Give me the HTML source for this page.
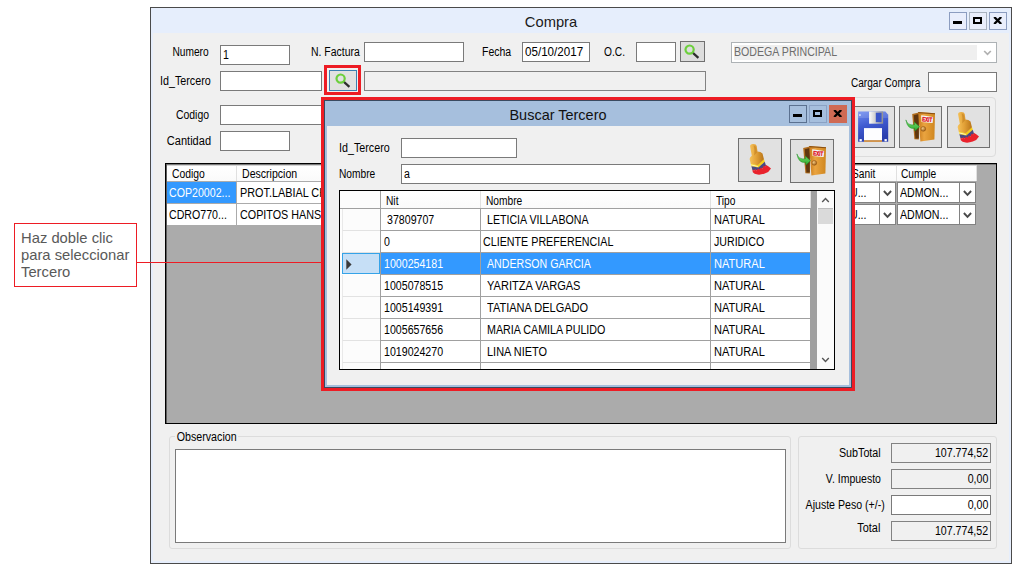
<!DOCTYPE html>
<html><head><meta charset="utf-8">
<style>
*{box-sizing:border-box;margin:0;padding:0}
html,body{width:1021px;height:570px;overflow:hidden;background:#fff}
body{position:relative;font-family:"Liberation Sans",sans-serif;font-size:12px;color:#000}
.a{position:absolute}
.l{position:absolute;white-space:nowrap;font-size:12px;line-height:14px;transform-origin:0 50%}
.l.r{transform-origin:100% 50%;text-align:right}
.tb{position:absolute;background:#fff;border:1px solid #7a7a7a;font-size:12px;line-height:14px;white-space:nowrap;overflow:hidden}
.tb span{position:absolute;top:2px;left:2px;transform-origin:0 50%;display:block}
.tb.r span{left:auto;right:2px;top:2px;transform-origin:100% 50%}
.ro{background:#f0f0f0;border-color:#828282}
.btn{position:absolute;background:#e1e1e1;border:1px solid #adadad}
.hd{position:absolute;background:linear-gradient(#fff,#fafafa);border-right:1px solid #e0e0e0;font-size:12px;line-height:14px;white-space:nowrap;overflow:hidden}
.hd span{position:absolute;top:1px;transform-origin:0 50%;display:block}
.c{position:absolute;background:#fff;font-size:12px;line-height:14px;white-space:nowrap;overflow:hidden}
.c span{position:absolute;top:4px;transform-origin:0 50%;display:block}
.sel{background:#3399ff;color:#fff}
.rh{position:absolute;background:#fcfcfc}
</style></head><body>
<div class="a" style="left:14px;top:223px;width:123px;height:64px;border:1px solid #ed1c24;background:#fff"></div>
<div class="a" style="left:21px;top:229px;font-size:15px;line-height:17px;color:#595959;white-space:nowrap;transform-origin:0 0;transform:scaleX(0.985)">Haz doble clic<br>para seleccionar<br>Tercero</div>
<div class="a" style="left:137px;top:262px;width:186px;height:1px;background:#ed1c24;z-index:5"></div>
<div class="a" style="left:150px;top:7px;width:862px;height:557px;border:1px solid #4a4a4a;background:#e6eefc"><div class="a" style="left:2px;top:25px;width:856px;height:528px;background:#f0f0f0"></div></div>
<div class="a" style="left:501px;top:12px;width:100px;text-align:center;font-size:15px;line-height:20px;color:#1a1a1a;transform:scaleX(0.98)">Compra</div>
<div class="a" style="left:949px;top:12px;width:18px;height:18px;background:#e9eefc;border:1px solid #8c9dc0"><div class="a" style="left:3px;top:8px;width:9px;height:3px;background:#000"></div></div>
<div class="a" style="left:969px;top:12px;width:18px;height:18px;background:#e9eefc;border:1px solid #a9b3c0"><div class="a" style="left:3px;top:4px;width:9px;height:7px;border:2px solid #000"></div></div>
<div class="a" style="left:989px;top:12px;width:18px;height:18px;background:#e9eefc;border:1px solid #8c9dc0"><svg class="a" style="left:3px;top:4px" width="10" height="7" viewBox="0 0 10 7"><path d="M1.2 0L8.2 7M8.2 0L1.2 7" stroke="#000" stroke-width="2.3"/></svg></div>
<div class="l r" style="right:812px;top:45px;transform:scaleX(0.85);">Numero</div>
<div class="tb " style="left:220px;top:45px;width:70px;height:20px;"><span style="transform:scaleX(0.885)">1</span></div>
<div class="l" style="left:311px;top:45px;transform:scaleX(0.87);">N. Factura</div>
<div class="tb " style="left:364px;top:42px;width:100px;height:20px;"></div>
<div class="l" style="left:482px;top:45px;transform:scaleX(0.873);">Fecha</div>
<div class="tb " style="left:522px;top:42px;width:68px;height:20px;"><span style="transform:scaleX(0.968)">05/10/2017</span></div>
<div class="l" style="left:604px;top:45px;transform:scaleX(0.85);">O.C.</div>
<div class="tb " style="left:636px;top:42px;width:40px;height:20px;"></div>
<div class="btn" style="left:680px;top:41px;width:25px;height:21px;background:#dddddd;border-color:#707070"><svg class="a" style="left:3.4px;top:2.2px" width="20" height="20" viewBox="0 0 20 20"><path d="M8.6 8.6L14.4 13.9" stroke="#2e2e2e" stroke-width="2.2"/><circle cx="5.6" cy="5.6" r="4.1" fill="none" stroke="#6ccf3c" stroke-width="2.2"/></svg></div>
<div class="a" style="left:731px;top:42px;width:266px;height:21px;border:1px solid #adb2b5;background:#fff"><div class="a" style="left:2px;top:2px;width:243px;height:15px;background:#efefef"></div><div class="l" style="left:2.2px;top:2px;color:#6d6d6d;transform:scaleX(0.885)">BODEGA PRINCIPAL</div><svg class="a" style="right:4.5px;top:6.5px" width="9" height="7" viewBox="0 0 9 7"><path d="M1.2 1L4.5 4.4L7.8 1" stroke="#b0b0b0" stroke-width="1.7" fill="none"/></svg></div>
<div class="l r" style="right:810px;top:74px;transform:scaleX(0.895);">Id_Tercero</div>
<div class="tb " style="left:220px;top:71px;width:102px;height:20px;"></div>
<div class="a" style="left:324px;top:65px;width:37px;height:30px;border:3px solid #ed1c24"></div>
<div class="btn" style="left:329px;top:70px;width:28px;height:21px;border-color:#3c7fb1"><svg class="a" style="left:5.2px;top:1.9px" width="20" height="20" viewBox="0 0 20 20"><path d="M8.6 8.6L14.4 13.9" stroke="#2e2e2e" stroke-width="2.2"/><circle cx="5.6" cy="5.6" r="4.1" fill="none" stroke="#6ccf3c" stroke-width="2.2"/></svg></div>
<div class="tb ro" style="left:364px;top:71px;width:342px;height:20px;"></div>
<div class="l" style="left:850.6px;top:76px;transform:scaleX(0.838);">Cargar Compra</div>
<div class="tb " style="left:928px;top:72px;width:69px;height:20px;"></div>
<div class="l r" style="right:812px;top:108px;transform:scaleX(0.87);">Codigo</div>
<div class="tb " style="left:220px;top:105px;width:150px;height:20px;"></div>
<div class="l r" style="right:810px;top:134px;transform:scaleX(0.92);">Cantidad</div>
<div class="tb " style="left:220px;top:131px;width:70px;height:20px;"></div>
<div class="a" style="left:840px;top:97px;width:156px;height:60px;border:1px solid #dcdcdc;border-radius:4px"></div>
<div class="btn" style="left:852px;top:106px;width:43px;height:42px;border-color:#707070"></div>
<div class="btn" style="left:899px;top:106px;width:43px;height:42px;border-color:#707070"></div>
<div class="btn" style="left:947px;top:106px;width:43px;height:42px;border-color:#707070"></div>
<svg width="0" height="0" style="position:absolute"><defs><linearGradient id="gh" x1="0" y1="0" x2="1" y2="0"><stop offset="0" stop-color="#f5c25a"/><stop offset="0.45" stop-color="#e3a238"/><stop offset="1" stop-color="#b87418"/></linearGradient><linearGradient id="gd" x1="0" y1="0" x2="1" y2="0"><stop offset="0" stop-color="#c87a1c"/><stop offset="0.35" stop-color="#eaa440"/><stop offset="1" stop-color="#cf861f"/></linearGradient><linearGradient id="gb" x1="0" y1="0" x2="0.3" y2="1"><stop offset="0" stop-color="#6f8df0"/><stop offset="0.5" stop-color="#3f5ad0"/><stop offset="1" stop-color="#2a3fae"/></linearGradient><linearGradient id="gm" x1="0" y1="0" x2="1" y2="0"><stop offset="0" stop-color="#fdfdfd"/><stop offset="0.5" stop-color="#c9c9c9"/><stop offset="1" stop-color="#8f8f8f"/></linearGradient><linearGradient id="gg" x1="0" y1="0" x2="0" y2="1"><stop offset="0" stop-color="#7fe470"/><stop offset="1" stop-color="#2aa830"/></linearGradient><radialGradient id="gk" cx="0.35" cy="0.35" r="0.7"><stop offset="0" stop-color="#f4c982"/><stop offset="1" stop-color="#9c5c12"/></radialGradient></defs></svg>
<svg class="a" style="left:852px;top:106px;z-index:0" width="44" height="44" viewBox="0 0 44 44"><path d="M6.1 5.5L33.3 5.5L36.2 8.8L36.2 35.8L6.1 35.8Z" fill="url(#gb)"/><path d="M6.1 5.5L33.3 5.5L36.2 8.8L36.2 12L6.1 12Z" fill="#fff" opacity="0.13"/><rect x="17.1" y="5.5" width="14" height="12.2" fill="url(#gm)"/><rect x="23.8" y="6.7" width="5.8" height="9.5" fill="#3a55c8"/><rect x="12" y="22.1" width="18" height="12.3" fill="#fdfdff"/><rect x="12" y="34.3" width="18" height="1.5" fill="#f0a030"/><rect x="7.5" y="33.1" width="2.3" height="2.2" fill="#fff"/><rect x="32.5" y="33.1" width="2.3" height="2.2" fill="#fff"/><rect x="7.1" y="8.2" width="1.6" height="1.7" fill="#dfe6ff"/></svg>
<svg class="a" style="left:898.5px;top:105px;z-index:0" width="44" height="44" viewBox="0 0 44 44"><path d="M13.2 9L19.8 7.4L19.8 34.4L15.4 34.2Z" fill="#b06c1c"/><path d="M14.8 10.2L19.8 9L19.8 33.6L16.4 33.4Z" fill="#5f360f"/><path d="M19.2 7.1L36 8.2L35.4 34.6L21.4 36.4Z" fill="url(#gd)"/><path d="M19.2 7.1L36 8.2L36 9.2L19.3 8.2Z" fill="#8a4f12"/><path d="M22.2 10.2L34.1 12L33.6 18L22.5 16.9Z" fill="#f4fbff"/><g transform="translate(23.1,16.2) rotate(5) scale(0.78,1.1)"><text x="0" y="0" font-family="Liberation Sans" font-weight="bold" font-size="5.8" fill="#e01522" stroke="#e01522" stroke-width="0.35">EXIT</text></g><circle cx="24.3" cy="23.9" r="2.4" fill="url(#gk)" stroke="#8a4f12" stroke-width="0.5"/><path d="M6.9 14.9Q8.4 20.6 15.4 19.8L15.2 17L20.5 21.7L15.9 26L15.7 23.3Q8.6 24.8 6.9 14.9Z" fill="url(#gg)" stroke="#1d8f22" stroke-width="0.5"/></svg>
<svg class="a" style="left:946.2px;top:105.5px;z-index:0" width="44" height="44" viewBox="0 0 44 44"><path d="M12.1 8.6Q11.8 6.2 15 6Q18.2 5.8 18.7 8L19.5 13.4Q22.6 13.6 24.5 15.4L26 21.4L19.9 27.6L12.8 25.7L11.6 20.9Q11.8 19 13.8 17.8Z" fill="url(#gh)"/><path d="M15.6 7.6Q17.6 7.4 18 9.4L18.9 14.6L16.2 17.4Q17 12 15.6 7.6Z" fill="#a8640f" opacity="0.35"/><path d="M12.8 25.5L19.8 27.3L26 21.3L26.8 23.9L20.3 29.7L13.4 28.3Z" fill="#f5cf16"/><path d="M13 26.3L19.7 28L20 28.9L13.3 27.5Z" fill="#fff7b8"/><path d="M13.4 28.2L20.3 29.6L26.8 23.8L28.1 28L21 32.2L14.4 31.9Z" fill="#4a497f"/><path d="M14.3 31.6L16.2 32.4L17.2 30.9L18.8 32.4L20 30.6L21.6 31.8L22.9 29.4L24.4 30.4L25.6 27.8L27.3 28.4L27.8 26.7Q30.8 28.6 33 30.4Q30.8 34.4 26.8 35.6Q22.8 37 19.6 36.6Q16 36 14.8 34.2Z" fill="#e9222c"/></svg>
<div class="a" style="left:165px;top:163px;width:832px;height:261px;background:#ababab;border:1px solid #000"></div>
<div class="a" style="left:166px;top:164px;width:1px;height:259px;background:#5e5e5e"></div>
<div class="a" style="left:167px;top:164px;width:829px;height:1px;background:#7a7a7a"></div>
<div class="a" style="left:167px;top:165px;width:810px;height:1px;background:#d4d4d4"></div>
<div class="hd" style="left:167px;top:166px;width:70px;height:15px"><span style="left:5.3px;transform:scaleX(0.865)">Codigo</span></div>
<div class="hd" style="left:237px;top:166px;width:120px;height:15px"><span style="left:5.3px;transform:scaleX(0.88)">Descripcion</span></div>
<div class="c sel" style="left:167px;top:182px;width:69px;height:21px"><span style="left:2.4px;transform:scaleX(0.885)">COP20002...</span></div>
<div class="c" style="left:237px;top:182px;width:119px;height:21px"><span style="left:3px;transform:scaleX(0.904)">PROT.LABIAL CHOCO</span></div>
<div class="c" style="left:167px;top:204px;width:69px;height:21px"><span style="left:2.4px;transform:scaleX(0.885)">CDRO770...</span></div>
<div class="c" style="left:237px;top:204px;width:119px;height:21px"><span style="left:2.5px;transform:scaleX(0.897)">COPITOS HANSAPLAST</span></div>
<div class="hd" style="left:840px;top:166px;width:57px;height:15px"><span style="left:12px;transform:scaleX(0.85)">Sanit</span></div>
<div class="hd" style="left:897px;top:166px;width:80px;height:15px"><span style="left:4.3px;transform:scaleX(0.85)">Cumple</span></div>
<div class="a" style="left:840px;top:182px;width:40px;height:21px;background:#fff;border:1px solid #828282;overflow:hidden"><span class="a" style="left:8.5px;top:3px;line-height:14px;white-space:nowrap;transform-origin:0 50%;transform:scaleX(0.885)">U...</span></div>
<div class="a" style="left:879px;top:182px;width:17px;height:21px;background:#fff;border:1px solid #828282"><svg class="a" style="left:3px;top:7px" width="9" height="7" viewBox="0 0 9 7"><path d="M0.9 1L4.5 4.8L8.1 1" stroke="#4a4a4a" stroke-width="1.9" fill="none"/></svg></div>
<div class="a" style="left:897px;top:182px;width:63px;height:21px;background:#fff;border:1px solid #828282;overflow:hidden"><span class="a" style="left:1.6px;top:3px;line-height:14px;white-space:nowrap;transform-origin:0 50%;transform:scaleX(0.885)">ADMON...</span></div>
<div class="a" style="left:959px;top:182px;width:17px;height:21px;background:#fff;border:1px solid #828282"><svg class="a" style="left:3px;top:7px" width="9" height="7" viewBox="0 0 9 7"><path d="M0.9 1L4.5 4.8L8.1 1" stroke="#4a4a4a" stroke-width="1.9" fill="none"/></svg></div>
<div class="a" style="left:840px;top:204px;width:40px;height:21px;background:#fff;border:1px solid #828282;overflow:hidden"><span class="a" style="left:8.5px;top:3px;line-height:14px;white-space:nowrap;transform-origin:0 50%;transform:scaleX(0.885)">U...</span></div>
<div class="a" style="left:879px;top:204px;width:17px;height:21px;background:#fff;border:1px solid #828282"><svg class="a" style="left:3px;top:7px" width="9" height="7" viewBox="0 0 9 7"><path d="M0.9 1L4.5 4.8L8.1 1" stroke="#4a4a4a" stroke-width="1.9" fill="none"/></svg></div>
<div class="a" style="left:897px;top:204px;width:63px;height:21px;background:#fff;border:1px solid #828282;overflow:hidden"><span class="a" style="left:1.6px;top:3px;line-height:14px;white-space:nowrap;transform-origin:0 50%;transform:scaleX(0.885)">ADMON...</span></div>
<div class="a" style="left:959px;top:204px;width:17px;height:21px;background:#fff;border:1px solid #828282"><svg class="a" style="left:3px;top:7px" width="9" height="7" viewBox="0 0 9 7"><path d="M0.9 1L4.5 4.8L8.1 1" stroke="#4a4a4a" stroke-width="1.9" fill="none"/></svg></div>
<div class="a" style="left:169px;top:436px;width:622px;height:113px;border:1px solid #dcdcdc;border-radius:3px"></div>
<div class="l" style="left:175px;top:430px;transform:scaleX(0.888);background:#f0f0f0;padding:0 2px;">Observacion</div>
<div class="tb " style="left:175px;top:449px;width:611px;height:94px;"></div>
<div class="a" style="left:798px;top:436px;width:199px;height:113px;border:1px solid #dcdcdc;border-radius:3px"></div>
<div class="l r" style="right:140.5px;top:446px;transform:scaleX(0.895);">SubTotal</div>
<div class="l r" style="right:140.5px;top:472px;transform:scaleX(0.875);">V. Impuesto</div>
<div class="l r" style="right:136.5px;top:498px;transform:scaleX(0.882);">Ajuste Peso (+/-)</div>
<div class="l r" style="right:140.5px;top:521px;transform:scaleX(0.91);">Total</div>
<div class="tb ro r" style="left:891px;top:443px;width:100px;height:20px;"><span style="transform:scaleX(0.885)">107.774,52</span></div>
<div class="tb ro r" style="left:891px;top:469px;width:100px;height:20px;"><span style="transform:scaleX(0.885)">0,00</span></div>
<div class="tb r" style="left:891px;top:495px;width:100px;height:20px;"><span style="transform:scaleX(0.885)">0,00</span></div>
<div class="tb ro r" style="left:891px;top:521px;width:100px;height:20px;"><span style="transform:scaleX(0.885)">107.774,52</span></div>
<div class="a" style="left:321px;top:97px;width:534px;height:294px;border:3px solid #ed1c24;background:#a6bfdd"><div class="a" style="left:0;top:0;width:528px;height:288px;border:1px solid #3a4a60"></div><div class="a" style="left:3px;top:26px;width:522px;height:259px;background:#f0f0f0"></div></div>
<div class="a" style="left:458px;top:105px;width:200px;text-align:center;font-size:15px;line-height:20px;color:#111;transform:scaleX(0.965)">Buscar Tercero</div>
<div class="a" style="left:789px;top:105px;width:18px;height:18px;background:#a6bfdd;border:1px solid #5b7190"><div class="a" style="left:3px;top:8px;width:9px;height:3px;background:#000"></div></div>
<div class="a" style="left:809px;top:105px;width:18px;height:18px;background:#a6bfdd;border:1px solid #8ba2c4"><div class="a" style="left:3px;top:4px;width:9px;height:7px;border:2px solid #000"></div></div>
<div class="a" style="left:829px;top:105px;width:18px;height:18px;background:#cf6a54;border:1px solid #cf6a54"><svg class="a" style="left:3px;top:4px" width="10" height="7" viewBox="0 0 10 7"><path d="M1.2 0L8.2 7M8.2 0L1.2 7" stroke="#000" stroke-width="2.3"/></svg></div>
<div class="l" style="left:339px;top:141px;transform:scaleX(0.895);">Id_Tercero</div>
<div class="tb " style="left:401px;top:138px;width:116px;height:20px;"></div>
<div class="l" style="left:339px;top:167px;transform:scaleX(0.85);">Nombre</div>
<div class="tb " style="left:401px;top:164px;width:309px;height:20px;"><span style="transform:scaleX(0.885)">a</span></div>
<div class="btn" style="left:738px;top:138px;width:44px;height:44px;border-color:#707070"></div>
<div class="btn" style="left:790px;top:139px;width:44px;height:44px;border-color:#707070"></div>
<svg class="a" style="left:738px;top:138px;z-index:0" width="44" height="44" viewBox="0 0 44 44"><path d="M12.1 8.6Q11.8 6.2 15 6Q18.2 5.8 18.7 8L19.5 13.4Q22.6 13.6 24.5 15.4L26 21.4L19.9 27.6L12.8 25.7L11.6 20.9Q11.8 19 13.8 17.8Z" fill="url(#gh)"/><path d="M15.6 7.6Q17.6 7.4 18 9.4L18.9 14.6L16.2 17.4Q17 12 15.6 7.6Z" fill="#a8640f" opacity="0.35"/><path d="M12.8 25.5L19.8 27.3L26 21.3L26.8 23.9L20.3 29.7L13.4 28.3Z" fill="#f5cf16"/><path d="M13 26.3L19.7 28L20 28.9L13.3 27.5Z" fill="#fff7b8"/><path d="M13.4 28.2L20.3 29.6L26.8 23.8L28.1 28L21 32.2L14.4 31.9Z" fill="#4a497f"/><path d="M14.3 31.6L16.2 32.4L17.2 30.9L18.8 32.4L20 30.6L21.6 31.8L22.9 29.4L24.4 30.4L25.6 27.8L27.3 28.4L27.8 26.7Q30.8 28.6 33 30.4Q30.8 34.4 26.8 35.6Q22.8 37 19.6 36.6Q16 36 14.8 34.2Z" fill="#e9222c"/></svg>
<svg class="a" style="left:790px;top:139px;z-index:0" width="44" height="44" viewBox="0 0 44 44"><path d="M13.2 9L19.8 7.4L19.8 34.4L15.4 34.2Z" fill="#b06c1c"/><path d="M14.8 10.2L19.8 9L19.8 33.6L16.4 33.4Z" fill="#5f360f"/><path d="M19.2 7.1L36 8.2L35.4 34.6L21.4 36.4Z" fill="url(#gd)"/><path d="M19.2 7.1L36 8.2L36 9.2L19.3 8.2Z" fill="#8a4f12"/><path d="M22.2 10.2L34.1 12L33.6 18L22.5 16.9Z" fill="#f4fbff"/><g transform="translate(23.1,16.2) rotate(5) scale(0.78,1.1)"><text x="0" y="0" font-family="Liberation Sans" font-weight="bold" font-size="5.8" fill="#e01522" stroke="#e01522" stroke-width="0.35">EXIT</text></g><circle cx="24.3" cy="23.9" r="2.4" fill="url(#gk)" stroke="#8a4f12" stroke-width="0.5"/><path d="M6.9 14.9Q8.4 20.6 15.4 19.8L15.2 17L20.5 21.7L15.9 26L15.7 23.3Q8.6 24.8 6.9 14.9Z" fill="url(#gg)" stroke="#1d8f22" stroke-width="0.5"/></svg>
<div class="a" style="left:339px;top:190px;width:496px;height:180px;border:1px solid #000;background:#a0a0a0;overflow:hidden"></div>
<div class="a" style="left:340px;top:191px;width:494px;height:178px;overflow:hidden">
<div class="rh" style="left:0;top:0;width:40px;height:17px"></div>
<div class="hd" style="left:41px;top:0;width:100px;height:17px;border-right:1px solid #e0e0e0"><span style="left:5px;top:3px;transform:scaleX(0.85)">Nit</span></div>
<div class="hd" style="left:141px;top:0;width:230px;height:17px;border-right:1px solid #e0e0e0"><span style="left:5px;top:3px;transform:scaleX(0.85)">Nombre</span></div>
<div class="hd" style="left:371px;top:0;width:100px;height:17px;border-right:1px solid #e0e0e0"><span style="left:5px;top:3px;transform:scaleX(0.85)">Tipo</span></div>
<div class="rh" style="left:0;top:18px;width:40px;height:160px;background:#fdfdfd"></div>
<div class="rh" style="top:18px;height:22px;background:#fcfcfc;border-left:1px solid #e9e9e9;border-bottom:1px solid #e2e2e2;left:2px;width:38px"></div>
<div class="c" style="left:41px;top:18px;width:99px;height:21px"><span style="left:6px;transform:scaleX(0.885)">37809707</span></div>
<div class="c" style="left:141px;top:18px;width:229px;height:21px"><span style="left:6px;transform:scaleX(0.885)">LETICIA VILLABONA</span></div>
<div class="c" style="left:371px;top:18px;width:99px;height:21px"><span style="left:3px;transform:scaleX(0.922)">NATURAL</span></div>
<div class="rh" style="top:40px;height:22px;background:#fcfcfc;border-left:1px solid #e9e9e9;border-bottom:1px solid #e2e2e2;left:2px;width:38px"></div>
<div class="c" style="left:41px;top:40px;width:99px;height:21px"><span style="left:3px;transform:scaleX(0.885)">0</span></div>
<div class="c" style="left:141px;top:40px;width:229px;height:21px"><span style="left:2px;transform:scaleX(0.893)">CLIENTE PREFERENCIAL</span></div>
<div class="c" style="left:371px;top:40px;width:99px;height:21px"><span style="left:3px;transform:scaleX(0.885)">JURIDICO</span></div>
<div class="rh" style="left:2px;top:62px;width:38px;height:21px;background:#c6dff6;border:1px solid #35a3e8"><svg class="a" style="left:2.6px;top:4.5px" width="7" height="11" viewBox="0 0 7 11"><path d="M0.3 0.3L5.6 5.5L0.3 10.7Z" fill="#3a3a3a"/></svg></div>
<div class="c sel" style="left:41px;top:62px;width:99px;height:21px"><span style="left:3px;transform:scaleX(0.885)">1000254181</span></div>
<div class="c sel" style="left:141px;top:62px;width:229px;height:21px"><span style="left:6px;transform:scaleX(0.885)">ANDERSON GARCIA</span></div>
<div class="c sel" style="left:371px;top:62px;width:99px;height:21px"><span style="left:3px;transform:scaleX(0.922)">NATURAL</span></div>
<div class="rh" style="top:84px;height:22px;background:#fcfcfc;border-left:1px solid #e9e9e9;border-bottom:1px solid #e2e2e2;left:2px;width:38px"></div>
<div class="c" style="left:41px;top:84px;width:99px;height:21px"><span style="left:3px;transform:scaleX(0.885)">1005078515</span></div>
<div class="c" style="left:141px;top:84px;width:229px;height:21px"><span style="left:6px;transform:scaleX(0.92)">YARITZA VARGAS</span></div>
<div class="c" style="left:371px;top:84px;width:99px;height:21px"><span style="left:3px;transform:scaleX(0.922)">NATURAL</span></div>
<div class="rh" style="top:106px;height:22px;background:#fcfcfc;border-left:1px solid #e9e9e9;border-bottom:1px solid #e2e2e2;left:2px;width:38px"></div>
<div class="c" style="left:41px;top:106px;width:99px;height:21px"><span style="left:3px;transform:scaleX(0.885)">1005149391</span></div>
<div class="c" style="left:141px;top:106px;width:229px;height:21px"><span style="left:6px;transform:scaleX(0.917)">TATIANA DELGADO</span></div>
<div class="c" style="left:371px;top:106px;width:99px;height:21px"><span style="left:3px;transform:scaleX(0.922)">NATURAL</span></div>
<div class="rh" style="top:128px;height:22px;background:#fcfcfc;border-left:1px solid #e9e9e9;border-bottom:1px solid #e2e2e2;left:2px;width:38px"></div>
<div class="c" style="left:41px;top:128px;width:99px;height:21px"><span style="left:3px;transform:scaleX(0.885)">1005657656</span></div>
<div class="c" style="left:141px;top:128px;width:229px;height:21px"><span style="left:6px;transform:scaleX(0.892)">MARIA CAMILA PULIDO</span></div>
<div class="c" style="left:371px;top:128px;width:99px;height:21px"><span style="left:3px;transform:scaleX(0.922)">NATURAL</span></div>
<div class="rh" style="top:150px;height:22px;background:#fcfcfc;border-left:1px solid #e9e9e9;border-bottom:1px solid #e2e2e2;left:2px;width:38px"></div>
<div class="c" style="left:41px;top:150px;width:99px;height:21px"><span style="left:3px;transform:scaleX(0.885)">1019024270</span></div>
<div class="c" style="left:141px;top:150px;width:229px;height:21px"><span style="left:6px;transform:scaleX(0.912)">LINA NIETO</span></div>
<div class="c" style="left:371px;top:150px;width:99px;height:21px"><span style="left:3px;transform:scaleX(0.922)">NATURAL</span></div>
<div class="rh" style="top:172px;height:22px;background:#fcfcfc;border-left:1px solid #e9e9e9;border-bottom:1px solid #e2e2e2;left:2px;width:38px"></div>
<div class="c" style="left:41px;top:172px;width:99px;height:21px"><span style="left:3px;transform:scaleX(0.885)"></span></div>
<div class="c" style="left:141px;top:172px;width:229px;height:21px"><span style="left:3px;transform:scaleX(0.885)"></span></div>
<div class="c" style="left:371px;top:172px;width:99px;height:21px"><span style="left:3px;transform:scaleX(0.885)"></span></div>
<div class="a" style="left:471px;top:0;width:6px;height:178px;background:#a0a0a0"></div>
<div class="a" style="left:477px;top:0;width:17px;height:178px;background:#fbfbfb"></div>
<svg class="a" style="left:481px;top:6px" width="9" height="6" viewBox="0 0 9 6"><path d="M1.2 5L4.5 1.6L7.8 5" stroke="#555" stroke-width="1.4" fill="none"/></svg>
<svg class="a" style="left:481px;top:166px" width="9" height="6" viewBox="0 0 9 6"><path d="M1.2 1L4.5 4.4L7.8 1" stroke="#555" stroke-width="1.4" fill="none"/></svg>
<div class="a" style="left:478px;top:17px;width:15px;height:16px;background:#dadada;border-top:1px solid #bdbdbd"></div>
</div>
</body></html>
